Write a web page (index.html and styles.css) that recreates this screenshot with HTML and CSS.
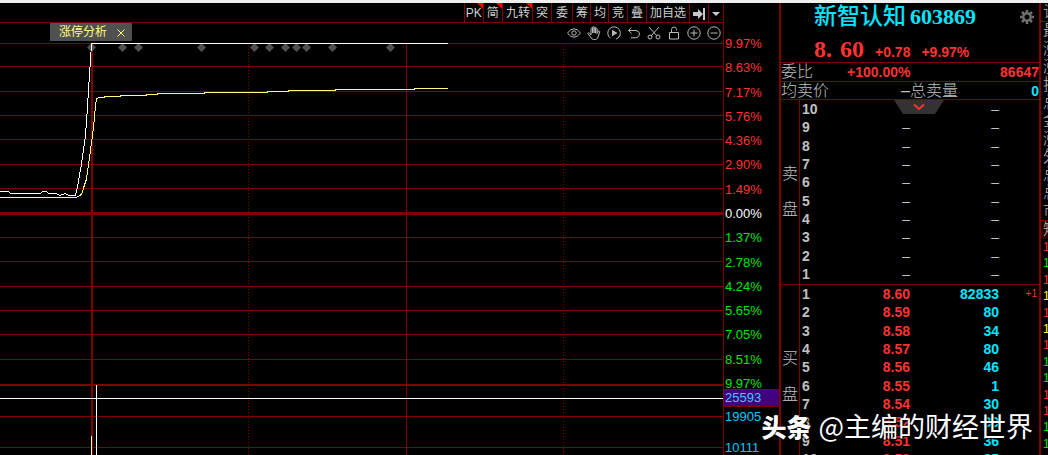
FILE: index.html
```html
<!DOCTYPE html>
<html lang="zh-CN">
<head>
<meta charset="utf-8">
<title>新智认知 603869</title>
<link rel="stylesheet" href="styles.css">
</head>
<body>
<div class="strip"></div>
<div class="app">
  <main class="chart">
    <nav class="toolbar">
      <button class="tool tool-pk flag">PK</button>
      <button class="tool flag">简</button>
      <button class="tool tool-tight flag">九转</button>
      <button class="tool">突</button>
      <button class="tool tool-wide">委</button>
      <button class="tool tool-tight">筹</button>
      <button class="tool tool-tight">均</button>
      <button class="tool">竞</button>
      <button class="tool">叠</button>
      <button class="tool">加自选</button>
      <button class="tool" aria-label="跳到最新"><svg width="12" height="12" viewBox="0 0 12 12"><path fill="#c8c8c8" d="M0 4h5V1l5 5-5 5V8H0zM10 0h2v12h-2z"/></svg></button>
      <button class="tool tool-drop" aria-label="更多"><svg width="8" height="4" viewBox="0 0 8 4"><path fill="#c8c8c8" d="M0 0h8L4 4z"/></svg></button>
    </nav>
    <div class="subbar">
      <div class="tag">涨停分析<button class="tag-close" aria-label="关闭"><svg width="8" height="8" viewBox="0 0 8 8"><path d="M.5.5l7 7M7.5.5l-7 7" stroke="#ffff80" fill="none"/></svg></button></div>
      <div class="icons">
        <button class="icon" aria-label="显示"><svg viewBox="0 0 14 14"><path d="M.5 7Q7-1.5 13.5 7 7 15.500.5 7z"/><circle cx="7" cy="7" r="2.200"/></svg></button>
        <button class="icon" aria-label="拖动"><svg viewBox="0 0 14 14"><path d="M4 9V2.500q.8-1 1.500 0V7V1.200q.8-1 1.600 0V7 1.500q.8-1 1.600 0V7.300 2.800q.8-1 1.500 0V7.500l1-2.300q1.300-.7 1.500.4L11.500 10q-.8 3.300-3 3.500H6.500Q4.500 13.300 3.500 11L.8 7.500Q1.200 6.200 2.400 7z"/></svg></button>
        <button class="icon" aria-label="回放"><svg viewBox="0 0 14 14"><path d="M3.500 12.300A6.300 6.300 0 1 1 9 13.100M11.800 11l1-1.200"/><path class="solid" d="M5 3.800L10.500 7 5 10.200z"/></svg></button>
        <button class="icon" aria-label="撤销"><svg viewBox="0 0 14 14"><path d="M4.500 1.500L1.500 4.500 4.500 7.500M1.500 4.500H9q3.500.3 3.500 3.500T9 11.800H4"/></svg></button>
        <button class="icon" aria-label="剪切"><svg viewBox="0 0 14 14"><path d="M2 1l8 9M12 1L4 10"/><circle cx="3" cy="11" r="2"/><circle cx="11" cy="11" r="2"/></svg></button>
        <button class="icon" aria-label="锁定"><svg viewBox="0 0 14 14"><path d="M2.500 6.500h9v6.500h-9zM4.500 6.500V3.500Q4.800 1 7 1t2.500 2.500v1"/></svg></button>
        <button class="icon" aria-label="放大"><svg viewBox="0 0 14 14"><circle cx="7" cy="7" r="6.200"/><path d="M3.500 7h7M7 3.500v7"/></svg></button>
        <button class="icon" aria-label="缩小"><svg viewBox="0 0 14 14"><circle cx="7" cy="7" r="6.200"/><path d="M3.500 7h7"/></svg></button>
      </div>
    </div>
    <svg class="plot" viewBox="0 42 723 413" preserveAspectRatio="none">
      <g shape-rendering="crispEdges" fill="none">
        <path stroke="#800000" d="M0 43.500H723M0 66.500H723M0 91.500H723M0 115.500H723M0 139.500H723M0 164.500H723M0 188.500H723M0 237.500H723M0 261.500H723M0 286.500H723M0 310.500H723M0 334.500H723M0 359.500H723M0 416.500H723M0 447.500H723M406.500 43V455"/>
        <path stroke="#800000" stroke-width="3" d="M0 213.500H723"/>
        <path stroke="#800000" stroke-width="2" d="M0 385H723M92 43V455"/>
        <path stroke="#800000" stroke-dasharray="1 2" d="M248.500 46V455M563.500 46V455"/>
      </g>
      <path fill="#505050" d="M91.500 43l4.500 4.500-4.500 4.500-4.500-4.500zM122.500 43l4.500 4.500-4.500 4.500-4.500-4.500zM138.500 43l4.500 4.500-4.500 4.500-4.500-4.500zM201.500 43l4.500 4.500-4.500 4.500-4.500-4.500zM254.500 43l4.500 4.500-4.500 4.500-4.500-4.500zM269.500 43l4.500 4.500-4.500 4.500-4.500-4.500zM285.500 43l4.500 4.500-4.500 4.500-4.500-4.500zM296.500 43l4.500 4.500-4.500 4.500-4.500-4.500zM306.500 43l4.500 4.500-4.500 4.500-4.500-4.500zM332.500 43l4.500 4.500-4.500 4.500-4.500-4.500zM390.500 43l4.500 4.500-4.500 4.500-4.500-4.500z"/>
      <g shape-rendering="crispEdges" fill="none">
        <path stroke="#ffff80" d="M0 197.500H76L81.500 194.500 83.500 188 86.500 179 88.500 165 90.500 150 92.500 135 94.500 118 95.500 105 96.500 98.500 99 97.500H104V96.500H120V95.500H146V94.500H157V93.500H204V92.500H267V91.500H288V90.500H335V89.500H414V88.500H448"/>
        <path stroke="#fff" d="M0 191.500H8L11 193.500H40L43 191.500H46L49 193.500H56L60 195.500 65 193.500 69 195.500H75.500L77.500 187 79.500 175 81.500 164 83.500 150 85.500 135 86.500 122 87.500 107 88.500 90 89.500 75 90.500 60 91.500 43.500H448"/>
        <path stroke="#fff" d="M0 398.500H723M96.500 385V455"/>
        <path stroke="#ffff80" d="M91.500 436V455"/>
      </g>
    </svg>
  </main>

  <aside class="axis">
    <div class="scale">
      <span>9.97%</span><span>8.63%</span><span>7.17%</span><span>5.76%</span><span>4.36%</span><span>2.90%</span><span>1.49%</span>
      <span class="zero">0.00%</span>
      <span class="down">1.37%</span><span class="down">2.78%</span><span class="down">4.24%</span><span class="down">5.65%</span><span class="down">7.05%</span><span class="down">8.51%</span><span class="down">9.97%</span>
    </div>
    <div class="volume volume-now">25593</div>
    <div class="volume">19905</div>
    <div class="volume volume-low">10111</div>
  </aside>

  <section class="quote">
    <header class="head">
      <h1 class="name"><span class="stock">新智认知</span><span>603869</span></h1>
      <button class="gear" aria-label="设置"><svg width="14" height="14" viewBox="0 0 14 14"><g stroke="#707070" fill="none"><circle cx="7" cy="7" r="3.700" stroke-width="2.400"/><path stroke-width="2.600" d="M7 0v2.500M7 11.500V14M0 7h2.500M11.500 7H14M2 2l1.800 1.800M10.200 10.200L12 12M12 2l-1.800 1.800M3.800 10.200L2 12"/></g></svg></button>
      <div class="last"><span class="price"><span>8.</span><span>60</span></span><span>+0.78</span><span>+9.97%</span></div>
    </header>
    <div class="line line-ratio"><span class="key">委比</span><b class="red">+100.00%</b><b class="red">86647</b></div>
    <div class="line line-avg"><span class="key">均卖价</span><span class="key">–总卖量</span><b class="cyan">0</b></div>
    <div class="book">
      <button class="fold" aria-label="收起"><svg width="50" height="14" viewBox="0 0 50 14"><path fill="#333" d="M0 0h50L41 14H9z"/><path d="M20 4.500l5 4.500 5-4.500" fill="none" stroke="#ff3232" stroke-width="2"/></svg></button>
      <div class="side">卖<br>盘</div>
      <table class="levels">
        <tr><th>10</th><td></td><td>–</td><td></td></tr>
        <tr><th>9</th><td>–</td><td>–</td><td></td></tr>
        <tr><th>8</th><td>–</td><td>–</td><td></td></tr>
        <tr><th>7</th><td>–</td><td>–</td><td></td></tr>
        <tr><th>6</th><td>–</td><td>–</td><td></td></tr>
        <tr><th>5</th><td>–</td><td>–</td><td></td></tr>
        <tr><th>4</th><td>–</td><td>–</td><td></td></tr>
        <tr><th>3</th><td>–</td><td>–</td><td></td></tr>
        <tr><th>2</th><td>–</td><td>–</td><td></td></tr>
        <tr><th>1</th><td>–</td><td>–</td><td></td></tr>
      </table>
    </div>
    <div class="book">
      <div class="side">买<br>盘</div>
      <table class="levels bids">
        <tr><th>1</th><td>8.60</td><td>82833</td><td>+1</td></tr>
        <tr><th>2</th><td>8.59</td><td>80</td><td></td></tr>
        <tr><th>3</th><td>8.58</td><td>34</td><td></td></tr>
        <tr><th>4</th><td>8.57</td><td>80</td><td></td></tr>
        <tr><th>5</th><td>8.56</td><td>46</td><td></td></tr>
        <tr><th>6</th><td>8.55</td><td>1</td><td></td></tr>
        <tr><th>7</th><td>8.54</td><td>30</td><td></td></tr>
        <tr><th>8</th><td>8.52</td><td>39</td><td></td></tr>
        <tr><th>9</th><td>8.51</td><td>36</td><td></td></tr>
        <tr><th>10</th><td>8.50</td><td>35</td><td></td></tr>
      </table>
    </div>
  </section>

  <aside class="more">
    <div class="more-head">详</div>
    <div class="more-keys">最<br>涨<br>涨<br>换<br>总<br>金<br>涨<br>外<br>总<br>总<br>市</div>
    <div class="more-title">短</div>
    <div class="ticks"><span class="red">1</span><span class="green">1</span><span class="red">1</span><span class="yellow">1</span><span class="red">1</span><span class="yellow">1</span><span class="red">1</span><span class="green">1</span><span class="green">1</span><span class="red">1</span><span class="red">1</span><span class="green">1</span><span class="green">1</span></div>
  </aside>
</div>
<div class="watermark"><b>头条</b><span>@主编的财经世界</span></div>
</body>
</html>
```
FILE: styles.css
```css
* { box-sizing: border-box; }
body {
  margin: 0;
  height: 100vh;
  position: relative;
  overflow: hidden;
  background: #000;
  color: #c0c0c0;
  font: 14px "Liberation Sans", "Noto Sans CJK SC", sans-serif;
}
button {
  margin: 0;
  padding: 0;
  border: 0;
  background: none;
  color: inherit;
  font: inherit;
}
svg { display: block; }
.red { color: #ff3232; }
.cyan { color: #00e6ff; }
.green { color: #00e600; }
.yellow { color: #ffff00; }

.strip { height: 3px; background: #f0f0f0; }
.app { display: flex; align-items: stretch; height: 100%; }

/* chart */
.chart { flex: 1; min-width: 0; }
.toolbar {
  display: flex;
  justify-content: flex-end;
  height: 20px;
  border-bottom: 1px solid #800000;
}
.tool {
  position: relative;
  display: flex;
  align-items: center;
  padding: 2px 3px 0;
  border-left: 1px solid #800000;
  font-size: 12px;
  line-height: 17px;
  color: #d0d0d0;
}
.tool-pk { padding: 2px 1px 0; }
.tool-wide { padding: 2px 4px 0; }
.tool-tight { padding: 2px 2px 0 3px; }
.flag::after {
  content: "";
  position: absolute;
  top: 0;
  right: 0;
  border-top: 6px solid #ff0000;
  border-left: 6px solid transparent;
}
.subbar {
  display: flex;
  justify-content: space-between;
  align-items: flex-start;
  height: 19px;
  padding: 0 2px 0 50px;
}
.tag {
  display: flex;
  align-items: center;
  gap: 10px;
  height: 18px;
  padding: 1px 7px 0 9px;
  background: #505050;
  color: #ffff80;
  font-size: 12px;
  line-height: 17px;
}
.icons { display: flex; gap: 6px; padding-top: 3px; }
.icon svg {
  width: 14px;
  height: 14px;
  fill: none;
  stroke: #b8b8b8;
}
.icon .solid { fill: #b8b8b8; stroke: none; }
.plot { width: 100%; height: 413px; }

/* price axis */
.axis {
  width: 56px;
  padding-top: 36px;
  border-left: 1px solid #800000;
  font-size: 13px;
}
.scale {
  display: flex;
  flex-direction: column;
  justify-content: space-between;
  height: 350px;
  padding-left: 1px;
  line-height: 10px;
  color: #ff3232;
}
.zero { color: #fff; }
.down { color: #00e600; }
.volume {
  height: 18px;
  padding-left: 1px;
  line-height: 18px;
  color: #00c8ff;
}
.volume-now {
  margin-bottom: 1px;
  line-height: 16px;
  background: #400080;
  border: solid #800000;
  border-width: 1px 0;
  color: #40c8ff;
}
.volume-low { margin-top: 13px; }

/* quote panel */
.quote {
  width: 262px;
  border: solid #800000;
  border-width: 0 2px;
}
.head {
  display: grid;
  grid-template-columns: 1fr 14px;
  grid-template-rows: 28px 31px;
  height: 59px;
  padding: 0 5px 0 33px;
}
.name {
  display: flex;
  gap: 4px;
  margin: 0;
  font: bold 22px/28px "Liberation Serif", "Noto Sans CJK SC", serif;
  color: #00e6ff;
}
.stock { font-size: 23px; font-weight: 500; }
.gear { height: 28px; }
.last {
  grid-column: 1 / 3;
  display: flex;
  align-items: baseline;
  gap: 11px;
  padding-top: 3px;
  font-weight: bold;
  line-height: 28px;
  color: #ff3232;
}
.price {
  display: flex;
  gap: 8px;
  font: bold 24px/31px "Liberation Serif", serif;
}
.line {
  display: grid;
  align-items: center;
  border-top: 1px solid #800000;
  line-height: 18px;
}
.line > :last-child { text-align: right; }
.line-ratio { grid-template-columns: 66px 1fr 1fr; height: 19px; }
.line-avg { grid-template-columns: 120px 1fr 1fr; height: 18px; }
.key { font-size: 16px; font-weight: 300; white-space: nowrap; }
.book {
  position: relative;
  display: flex;
  height: 185px;
  border-top: 1px solid #800000;
}
.side {
  width: 19px;
  padding-top: 56px;
  border-right: 1px solid #800000;
  font-size: 16px;
  font-weight: 300;
  line-height: 36px;
  text-align: center;
}
.levels {
  flex: 1;
  height: 183px;
  table-layout: fixed;
  border-collapse: collapse;
  line-height: 16px;
}
.levels th, .levels td { padding: 0; text-align: right; }
.levels th { width: 24px; padding-left: 2px; text-align: left; }
.levels td:nth-child(2) { width: 86px; }
.levels td:nth-child(3) { width: 89px; }
.bids td { font-weight: bold; color: #ff3232; }
.bids td:nth-child(3) { color: #00e6ff; }
.bids td:nth-child(4) { padding-right: 2px; font-size: 10px; font-weight: normal; }
.fold { position: absolute; top: 0; left: 113px; }

/* clipped neighbour panel */
.more { width: 7px; overflow: hidden; font-size: 16px; font-weight: 300; }
.more > * { padding-left: 2px; }
.more-head { height: 18px; line-height: 18px; }
.more-keys { border-top: 1px solid #800000; line-height: 18px; }
.more-title {
  height: 19px;
  line-height: 18px;
  border-top: 1px solid #800000;
  background: #280000;
}
.ticks {
  display: flex;
  flex-direction: column;
  justify-content: space-between;
  height: 213px;
  font-size: 12px;
  font-weight: normal;
  line-height: 16px;
}

.watermark {
  position: absolute;
  right: 15px;
  bottom: 9px;
  display: flex;
  align-items: center;
  gap: 7px;
  color: #fff;
  font: 27px/40px "Noto Sans CJK SC", sans-serif;
  text-shadow: 0 0 2px #000, 1px 1px 1px #000;
}
.watermark b { font-size: 25px; font-weight: 900; }
```
